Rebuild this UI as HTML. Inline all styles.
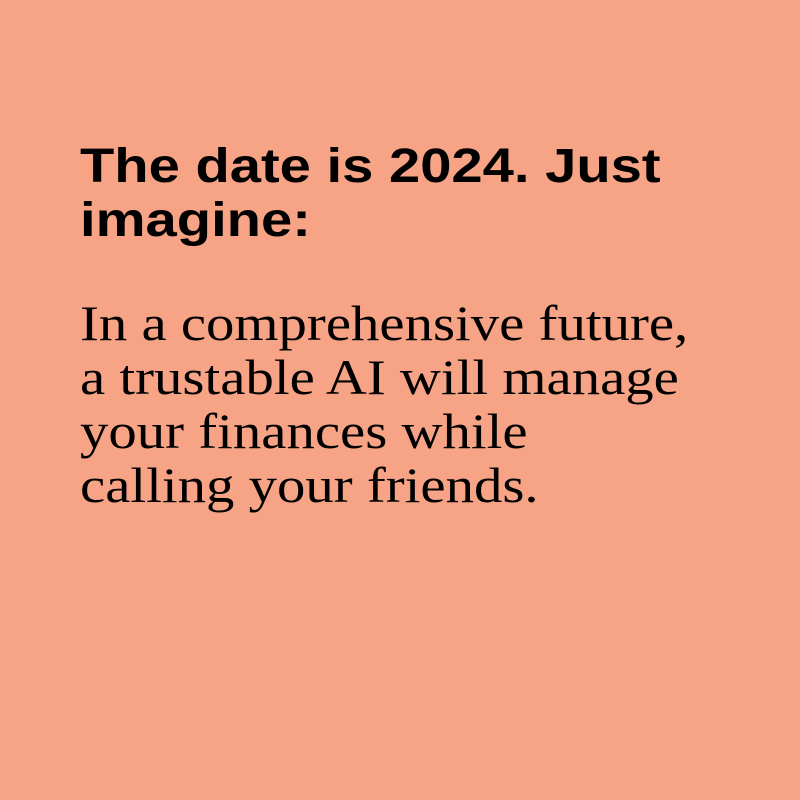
<!DOCTYPE html>
<html><head><style>
html,body{margin:0;padding:0;}
body{width:800px;height:800px;background:#f7a386;position:relative;overflow:hidden;}
h1{position:absolute;left:80px;top:140px;margin:0;font-family:"Liberation Sans",sans-serif;font-weight:bold;font-size:48px;line-height:54px;color:#000;white-space:nowrap;transform-origin:0 0;transform:scaleX(1.17);}
p{position:absolute;left:80px;top:296px;margin:0;font-family:"Liberation Serif",serif;font-size:50px;line-height:54px;color:#000;white-space:nowrap;transform-origin:0 0;transform:scaleX(1.135);}
</style></head><body>
<h1>The date is 2024. Just<br>imagine:</h1>
<p>In a comprehensive future,<br>a trustable AI will manage<br>your finances while<br>calling your friends.</p>
</body></html>
